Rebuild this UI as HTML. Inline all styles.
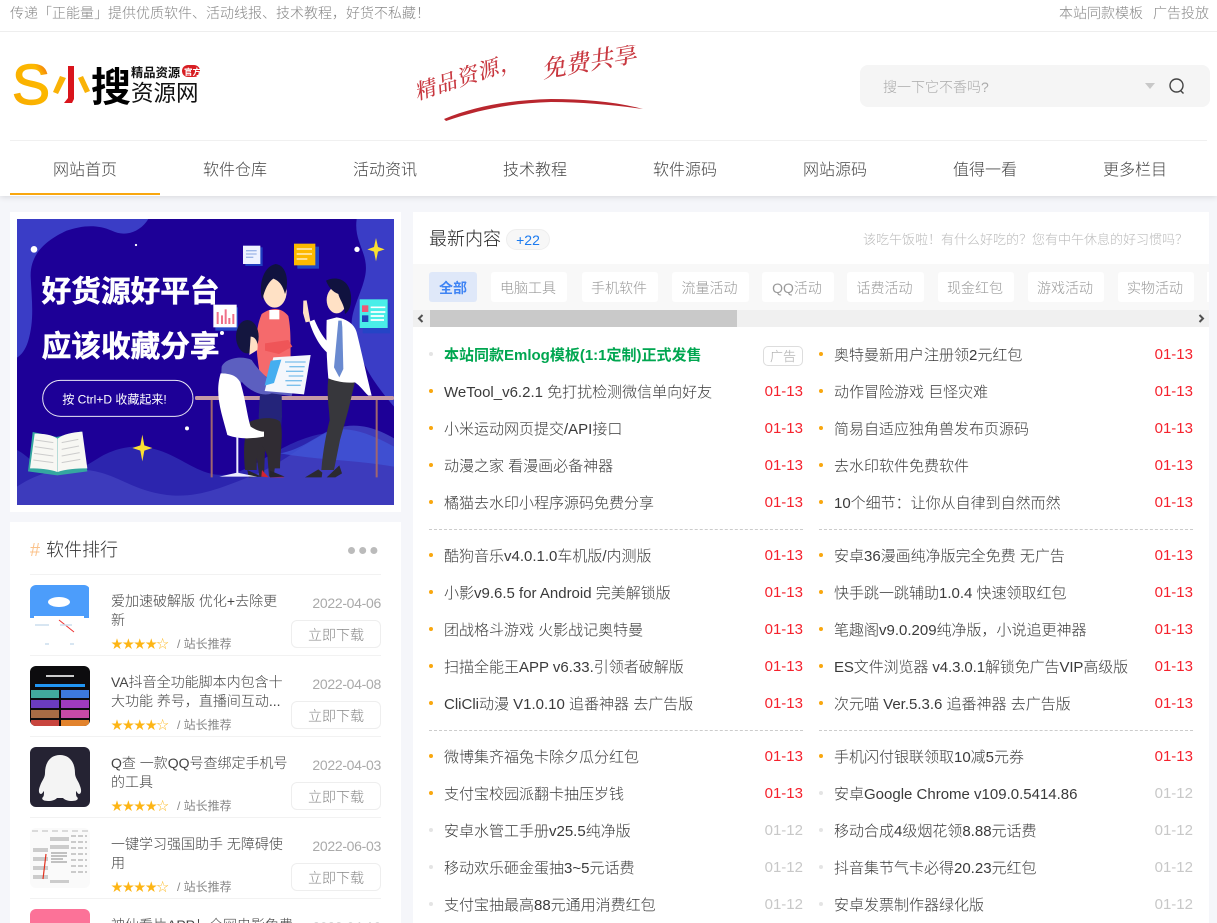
<!DOCTYPE html>
<html lang="zh-CN"><head><meta charset="utf-8"><title>小搜资源网</title>
<style>
*{box-sizing:border-box;margin:0;padding:0}
html,body{width:1217px;height:923px;overflow:hidden}
body{position:relative;background:#f5f6fa;font-family:"Liberation Sans","Noto Sans CJK SC",sans-serif;font-weight:300;color:#333}
.a{position:absolute;white-space:nowrap}
.card{position:absolute;background:#fff}
ul{list-style:none}
.c{position:absolute;width:374px}
.c li{position:relative;height:37px;line-height:39px;font-size:15px;padding-left:15px;white-space:nowrap;color:#3a3a3a}
.c li:before{content:"";position:absolute;left:0;top:16px;width:4px;height:4px;border-radius:50%;background:#f9a70f}
.c li.o:before{background:#e4e4e4}
.c li i{position:absolute;right:0;top:-1px;font-style:normal;color:#f5222d;font-size:15px;letter-spacing:0}
.c li.o i{color:#c8c8c8}
.dash{position:absolute;width:374px;border-top:1px dashed #ccc;height:0}
.nav{position:absolute;top:141px;width:150px;height:52px;line-height:59px;text-align:center;font-size:16px;color:#444}
.tab{position:absolute;top:272px;height:30px;line-height:32px;background:#fff;border-radius:3px;text-align:center;font-size:14px;color:#999;padding-right:2px}
.sep{position:absolute;left:30px;width:351px;height:1px;background:#f2f2f2}
.th{position:absolute;left:30px;width:60px;height:60px;border-radius:6px;overflow:hidden}
.t{position:absolute;left:111px;width:184px;font-size:14px;line-height:19px;color:#444;height:38px;overflow:hidden;white-space:nowrap}
.d{position:absolute;right:836px;font-size:14px;color:#aaa;letter-spacing:-.3px}
.b{position:absolute;left:291px;width:90px;height:28px;border:1px solid #eee;border-radius:6px;text-align:center;line-height:28px;font-size:14px;color:#888;background:#fff}
.s{position:absolute;left:111px;font-size:12px;line-height:14px;color:#fdb515;letter-spacing:-.6px;white-space:nowrap}
.s b{font-weight:400;color:#888;margin-left:9px;letter-spacing:0}
</style></head><body>

<div class="card" style="left:0;top:0;width:1217px;height:196px;box-shadow:0 1px 6px rgba(0,0,0,.13)"></div>
<div class="a" style="left:0;top:31px;width:1217px;height:1px;background:#eee"></div>
<div class="a" style="left:10px;top:3px;font-size:14px;line-height:20px;color:#888">传递「正能量」提供优质软件、活动线报、技术教程，好货不私藏！</div>
<div class="a" style="left:1059px;top:3px;font-size:14px;line-height:20px;color:#888">本站同款模板</div>
<div class="a" style="left:1153px;top:3px;font-size:14px;line-height:20px;color:#888">广告投放</div>

<!-- logo -->
<svg class="a" style="left:10px;top:55px" width="195" height="60" viewBox="0 0 195 60">
<defs><linearGradient id="sg" x1="0" y1="1" x2="1" y2="0"><stop offset="0" stop-color="#f7a800"/><stop offset=".7" stop-color="#fdb900"/><stop offset="1" stop-color="#e8361c"/></linearGradient></defs>
<text x="2" y="49" font-size="57" font-weight="400" fill="url(#sg)" stroke="url(#sg)" stroke-width="1.400" font-family="Liberation Sans">S</text>
<path d="M58 11h6v33l-2 4h-8l4-5z" fill="#d9141c"/>
<path d="M50 21l6 2-8 16-5-2zM73 21l-5 2 7 15 5-2z" fill="#f9b207"/>
<text x="81" y="46" font-size="40" font-weight="700" fill="#000" font-family="Noto Sans CJK SC">搜</text>
<text x="121" y="22" font-size="12.300" font-weight="700" fill="#111" font-family="Noto Sans CJK SC">精品资源</text>
<rect x="172" y="10" width="18" height="12" rx="6" fill="#d81e23"/>
<text x="174" y="20" font-size="8.500" font-weight="700" fill="#fff" font-family="Noto Sans CJK SC">官方</text>
<text x="121" y="46" font-size="22.500" fill="#111" font-weight="400" font-family="Noto Sans CJK SC">资源网</text>
</svg>

<!-- slogan -->
<svg class="a" style="left:405px;top:45px" width="250" height="85" viewBox="0 0 250 85">
<g fill="#c8373f" font-family="Noto Serif CJK SC,serif" font-style="italic" font-weight="500">
<text font-size="21" transform="translate(12 55) rotate(-18)" letter-spacing="1">精品资源，</text>
<text font-size="24" transform="translate(138 33) rotate(-10)">免费共享</text>
</g>
<path d="M39 74C70 61 105 55 146 54c35 0 65 3 92 10-30-4-60-7-92-7-38 1-70 7-105 19z" fill="#b9262e"/>
</svg>

<!-- search -->
<div class="a" style="left:860px;top:65px;width:350px;height:42px;background:#f5f5f5;border-radius:8px"></div>
<div class="a" style="left:883px;top:77px;font-size:14px;line-height:20px;color:#aaa">搜一下它不香吗?</div>
<div class="a" style="left:1145px;top:83px;width:0;height:0;border:5px solid transparent;border-top:6px solid #c8c8c8;border-bottom:0"></div>
<svg class="a" style="left:1167px;top:76px" width="20" height="20" viewBox="0 0 20 20" fill="none" stroke="#444" stroke-width="1.400"><circle cx="9.500" cy="9.500" r="6.500"/><path d="M13.500 14.500l3 3"/></svg>

<div class="a" style="left:10px;top:140px;width:1197px;height:1px;background:#f0f0f0"></div>
<div class="nav" style="left:10px">网站首页</div>
<div class="nav" style="left:160px">软件仓库</div>
<div class="nav" style="left:310px">活动资讯</div>
<div class="nav" style="left:460px">技术教程</div>
<div class="nav" style="left:610px">软件源码</div>
<div class="nav" style="left:760px">网站源码</div>
<div class="nav" style="left:910px">值得一看</div>
<div class="nav" style="left:1060px">更多栏目</div>
<div class="a" style="left:10px;top:193px;width:150px;height:2px;background:#f9a70f"></div>

<!-- left banner card -->
<div class="card" style="left:10px;top:212px;width:391px;height:300px"></div>
<svg class="a" style="left:17px;top:219px" width="377" height="286" viewBox="21 27 1131 858">
<rect x="21" y="27" width="1131" height="858" fill="#3a3dc6"/>
<path d="M170 62C110 90 60 130 62 200c3 70 12 130-8 195-8 25-20 40-33 48V720l100 140 1031-60V590c-50-60-90-110-112-190-40-70 10-130 25-200 15-70-35-100-25-173H415c-25 40-70 55-110 35-45-20-90-15-135 0z" fill="#1d0097"/>
<path d="M21 720c40 20 60 60 110 65 70 5 90-15 150-50 60-30 120-35 190-5 70 30 120 80 200 60 70-20 130-80 230-110 80-25 170-10 251 25V885H21z" fill="#2c25ae"/>
<path d="M21 830c60-40 130-60 210-50 90 10 130 60 240 75 90 10 160-20 260-60 100-40 150-100 250-140 60-20 120 0 171 30V885H21z" fill="#3d3bbc"/>
<path d="M810 730c60-10 110-50 150-70 60-10 120 10 192 50v60c-110-20-230-20-342-40z" fill="#4057d8" opacity=".75"/>
<circle cx="72" cy="118" r="10" fill="#fff"/><circle cx="378" cy="105" r="3.500" fill="#fff"/><circle cx="1041" cy="118" r="8" fill="#fff"/><circle cx="531" cy="655" r="6" fill="#fff"/><circle cx="636" cy="369" r="6" fill="#fff"/>
<path d="M1098 84l6 27 20 7-20 7-6 29-6-29-20-7 20-7z" fill="#fbe032"/>
<path d="M397 674l6 32 24 8-24 8-6 32-6-32-24-8 24-8z" fill="#fbe032"/>
<g font-family="Noto Sans CJK SC,sans-serif" fill="#fff" stroke="#fff" stroke-width="1.500" font-weight="700">
<text x="95" y="275" font-size="89">好货源好平台</text>
<text x="95" y="439" font-size="89">应该收藏分享</text>
</g>
<rect x="98" y="511" width="451" height="108" rx="54" fill="none" stroke="#fff" stroke-width="3" opacity=".9"/>
<text x="157" y="581" font-size="36" fill="#fff" font-weight="400" font-family="Liberation Sans,Noto Sans CJK SC,sans-serif">按 Ctrl+D 收藏起来!</text>
<!-- book -->
<path d="M54 784l14-118 72 15 74-17 18 120-90 12z" fill="#35a7a0"/>
<path d="M60 775l14-104c26 0 52 3 68 15v100c-22-9-54-11-82-11zM232 775l-15-110c-30 2-58 8-74 21v100c22-9 58-11 89-11z" fill="#f7f7f3"/>
<g stroke="#ccc" stroke-width="3" fill="none"><path d="M76 690l54 8M74 710l56 8M72 730l58 8M70 750l60 8M155 698l50-10M155 718l52-10M155 738l54-10M155 758l56-10"/></g>
<!-- notes -->
<rect x="706" y="112" width="52" height="56" fill="#1f3dc0"/><rect x="699" y="107" width="52" height="55" fill="#eef2ff"/>
<path d="M708 122h32M708 132h32M708 142h22" stroke="#9db6e8" stroke-width="4"/>
<rect x="862" y="110" width="65" height="66" fill="#1e46c8"/><rect x="852" y="101" width="64" height="65" fill="#fdb900"/>
<path d="M860 117h46M860 132h46M860 147h32" stroke="#ffe6a5" stroke-width="5"/>
<rect x="1058" y="280" width="82" height="90" fill="#2544c6"/><rect x="1049" y="268" width="84" height="86" fill="#4aeee8"/>
<rect x="1056" y="286" width="19" height="20" fill="#ee5a74"/><rect x="1056" y="316" width="19" height="20" fill="#2246b8"/>
<path d="M1082 292h44M1082 306h44M1082 318h40M1082 330h40" stroke="#fff" stroke-width="5"/>
<rect x="616" y="292" width="68" height="70" fill="#2544c6"/><rect x="610" y="284" width="70" height="68" fill="#fff"/>
<path d="M620 342v-36h6v36zM633 342v-26h6v26zM644 342v-44h6v44zM655 342v-18h6v18zM667 342v-30h6v30z" fill="#ef7189"/>
<!-- table -->
<path d="M602 570h6v232h-6zM1097 570h6v232h-6z" fill="#a0666f"/>
<rect x="555" y="558" width="597" height="12" rx="4" fill="#c59aa6"/>
<!-- standing woman -->
<path d="M753 500l-7 120 5 60h60l5-60-2-130z" fill="#24247a"/>
<path d="M726 640l22 160h14l5-130 10 130h14l18-140-5-30h-60z" fill="#302c33"/>
<path d="M756 780l20 22-22-2zM780 790l44 12h-44z" fill="#d3232f"/>
<path d="M755 312c30-22 60-20 80 6 10 50 5 100 8 190-35 20-70 0-95-25-10-60-15-120 7-171z" fill="#f56a6c"/>
<path d="M778 300h30v28h-30z" fill="#fff"/>
<ellipse cx="794" cy="245" rx="36" ry="48" fill="#ffe1c5"/>
<path d="M757 270c-12-40 0-100 40-108 36 4 40 60 28 90-8-30-20-40-35-46-14 10-26 30-33 64z" fill="#10123f"/>
<path d="M765 400l70-10 12 20-40 22-42-10z" fill="#ef5558"/>
<!-- seated man -->
<path d="M720 635c20-10 70-18 90 0 12 30 0 90 0 140h-30c-2-40-20-60-30-80-10 30-10 60-10 85h-35c-5-50-5-110 15-145z" fill="#302c33"/>
<path d="M712 780l42 20-38 2zM780 782l44 18-44 2z" fill="#27252c"/>
<path d="M635 470c10-25 60-35 90-20 20 30 50 60 80 78l45 12-5 18-60-8c-30 12-70-10-90-35-20 40-10 60-5 80h-30c-25-40-28-90-25-125z" fill="#5c5fc0"/>
<path d="M632 490c25 0 50 5 60 30 15 50 20 100 30 130 15 10 30 15 40 15v15c-30 5-70 10-110-5-15-60-40-120-20-185z" fill="#fff"/>
<path d="M679 680h6v115l-6-5zM628 800l54-12 60 12z" fill="#eef"/>
<ellipse cx="712" cy="380" rx="34" ry="50" fill="#14163f"/>
<path d="M722 380c15 0 24 18 20 40l-24 15z" fill="#ffe1c5"/>
<!-- laptop -->
<path d="M790 442l112-7-20 118-118-10z" fill="#f4f7fc"/>
<path d="M782 452l32-3-22 70-28 8z" fill="#45aef0"/>
<path d="M825 456h62M838 470h46M828 484h52M836 498h44M826 512h50M830 526h42" stroke="#7cc0ec" stroke-width="4"/>
<!-- standing man -->
<path d="M955 505l80 10-20 85-25 90-18 90h-38c5-60 15-110 25-150-2-40-10-80-4-125z" fill="#37373c"/>
<path d="M885 802l40-24 12 10-2 14zM950 802l38-36 8 24-20 12z" fill="#2b2930"/>
<path d="M980 322l-30 8c-2 60 0 120 5 175 25 10 55 15 80 12 15 10 25 25 40 40h10c-15-60-30-130-45-190-5-20-25-40-60-45z" fill="#fff"/>
<path d="M898 335l15-6c15 35 30 60 45 70l-5 30c-25-20-45-60-55-94z" fill="#fff"/>
<path d="M985 332h10l2 20 3 125-12 25-16-30z" fill="#6a8ad0"/>
<ellipse cx="980" cy="270" rx="30" ry="40" fill="#ffe1c5"/>
<path d="M948 212c30-15 70-5 75 45 2 25-3 45-18 55-2-30-15-40-20-60-15-5-30-20-37-40z" fill="#10123f"/>
<path d="M880 272l10-1 6 35 5 28-14 3-8-28z" fill="#ffe1c5"/>
</svg>

<!-- rank card -->
<div class="card" style="left:10px;top:522px;width:391px;height:401px"></div>
<div class="a" style="left:30px;top:537px;font-size:18px;line-height:26px;color:#fbc28a">#</div>
<div class="a" style="left:46px;top:537px;font-size:18px;line-height:26px;color:#333">软件排行</div>
<div class="a" style="left:348px;top:547px;width:7px;height:7px;border-radius:50%;background:#bbb;box-shadow:11.200px 0 #bbb,22.400px 0 #bbb"></div>
<div class="sep" style="top:574px"></div><div class="sep" style="top:655px"></div><div class="sep" style="top:736px"></div><div class="sep" style="top:817px"></div><div class="sep" style="top:898px"></div>

<svg class="th" style="top:585px" viewBox="0 0 60 60"><rect width="60" height="60" fill="#fff"/><rect width="59" height="33" fill="#4c9dfb"/><ellipse cx="29" cy="17" rx="11" ry="5" fill="#fff"/><rect x="4" y="31" width="50" height="7" fill="#fff"/><path d="M29 35l15 12" stroke="#e33" stroke-width="1"/><path d="M5 40h14M30 40h12M15 59h4M40 59h4" stroke="#cde" stroke-width="1.500"/></svg>
<svg class="th" style="top:666px" viewBox="0 0 60 60"><rect width="60" height="60" fill="#0d0c0e"/><rect x="5" y="18" width="50" height="3" fill="#2196f3"/><path d="M16 10h28" stroke="#ccc" stroke-width="2"/>
<rect x="1" y="24" width="28" height="8" fill="#41a99d"/><rect x="31" y="24" width="28" height="8" fill="#3d79de"/><rect x="1" y="34" width="28" height="8" fill="#6a3cc0"/><rect x="31" y="34" width="28" height="8" fill="#9f3bbe"/><rect x="1" y="44" width="28" height="8" fill="#a86c45"/><rect x="31" y="44" width="28" height="8" fill="#c84aa7"/><rect x="1" y="54" width="28" height="6" fill="#c8453e"/><rect x="31" y="54" width="28" height="6" fill="#e2832d"/></svg>
<svg class="th" style="top:747px" viewBox="0 0 60 60"><rect width="60" height="60" fill="#252333"/><path d="M30 8c10 0 15 8 15 18 0 5 3 7 5 13 2 5 1 8-1 8-1 0-2-2-3-3 0 3 0 5 1 6 2 2 0 4-5 4-4 0-7-1-9-3h-6c-2 2-5 3-9 3-5 0-7-2-5-4 1-1 1-3 1-6-1 1-2 3-3 3-2 0-3-3-1-8 2-6 5-8 5-13C15 16 20 8 30 8z" fill="#f4f4f4"/></svg>
<svg class="th" style="top:828px" viewBox="0 0 60 60"><rect width="60" height="60" fill="#fafafa"/><path d="M2 3h56" stroke="#bbb" stroke-width="1" stroke-dasharray="6 4"/><g fill="#ccc"><rect x="3" y="20" width="15" height="4"/><rect x="3" y="29" width="15" height="4"/><rect x="3" y="38" width="15" height="4"/><rect x="3" y="47" width="15" height="4"/><rect x="20" y="9" width="19" height="4"/><rect x="20" y="17" width="19" height="4"/><rect x="20" y="52" width="19" height="3"/></g><path d="M21 25h16M21 28h16M21 31h12M21 34h16" stroke="#888" stroke-width="1"/><path d="M41 8h16M41 14h16M41 20h16M41 26h16M41 32h16M41 38h16M41 44h16" stroke="#bbb" stroke-width="1.500" stroke-dasharray="5 2"/><path d="M16 26l-3 25" stroke="#e2321f" stroke-width="1.200"/></svg>
<div class="th" style="top:909px;background:#fc7298"></div>

<div class="t" style="top:592px">爱加速破解版 优化+去除更<br>新</div>
<div class="t" style="top:673px">VA抖音全功能脚本内包含十<br>大功能 养号，直播间互动...</div>
<div class="t" style="top:754px">Q查 一款QQ号查绑定手机号<br>的工具</div>
<div class="t" style="top:835px">一键学习强国助手 无障碍使<br>用</div>
<div class="t" style="top:916px">神仙看片APP！全网电影免费</div>

<div class="d" style="top:595px">2022-04-06</div><div class="d" style="top:676px">2022-04-08</div><div class="d" style="top:757px">2022-04-03</div><div class="d" style="top:838px">2022-06-03</div><div class="d" style="top:919px">2022-04-10</div>

<div class="b" style="top:620px">立即下载</div><div class="b" style="top:701px">立即下载</div><div class="b" style="top:782px">立即下载</div><div class="b" style="top:863px">立即下载</div>

<div class="s" style="top:637px">★★★★☆<b>/ 站长推荐</b></div>
<div class="s" style="top:718px">★★★★☆<b>/ 站长推荐</b></div>
<div class="s" style="top:799px">★★★★☆<b>/ 站长推荐</b></div>
<div class="s" style="top:880px">★★★★☆<b>/ 站长推荐</b></div>

<!-- main card -->
<div class="card" style="left:413px;top:212px;width:796px;height:711px"></div>
<div class="a" style="left:429px;top:226px;font-size:18px;line-height:26px;color:#222">最新内容</div>
<div class="a" style="left:506px;top:229px;width:44px;height:21px;line-height:21px;border:1px solid #eee;border-radius:11px;background:#f7f7f7;text-align:center;font-size:14px;color:#1a7af0">+22</div>
<div class="a" style="left:863px;top:229px;font-size:13px;line-height:21px;color:#bbb">该吃午饭啦！有什么好吃的？您有中午休息的好习惯吗？</div>

<div class="a" style="left:413px;top:264px;width:796px;height:46px;background:#f8f8f8"></div>
<div class="tab" style="left:429px;width:48px;background:#dfe8f9;color:#3f84f4;font-weight:700;padding-right:0">全部</div>
<div class="tab" style="left:491px;width:76px">电脑工具</div>
<div class="tab" style="left:582px;width:76px">手机软件</div>
<div class="tab" style="left:672px;width:77px">流量活动</div>
<div class="tab" style="left:762px;width:72px">QQ活动</div>
<div class="tab" style="left:847px;width:77px">话费活动</div>
<div class="tab" style="left:938px;width:76px">现金红包</div>
<div class="tab" style="left:1028px;width:76px">游戏活动</div>
<div class="tab" style="left:1118px;width:76px">实物活动</div>
<div class="a" style="left:1207px;top:272px;width:2px;height:30px;background:#fff"></div>

<div class="a" style="left:413px;top:310px;width:796px;height:17px;background:#f0f0f0"></div>
<div class="a" style="left:430px;top:310px;width:307px;height:17px;background:#c9c9c9"></div>
<svg class="a" style="left:413px;top:310px" width="17" height="17" viewBox="0 0 17 17"><path d="M9.500 5l-3.500 3.500 3.500 3.500" fill="none" stroke="#505050" stroke-width="2"/></svg>
<svg class="a" style="left:1192px;top:310px" width="17" height="17" viewBox="0 0 17 17"><path d="M7.500 5l3.500 3.500-3.500 3.500" fill="none" stroke="#505050" stroke-width="2"/></svg>

<ul class="c" style="left:429px;top:336px">
<li class="o" style="color:#00a650;font-weight:700">本站同款Emlog模板(1:1定制)正式发售<span style="position:absolute;left:334px;top:10px;width:40px;height:20px;border:1px solid #ddd;border-radius:5px;line-height:19px;font-size:13px;font-weight:300;text-align:center;color:#aaa">广告</span></li>
<li>WeTool_v6.2.1 免打扰检测微信单向好友<i>01-13</i></li>
<li>小米运动网页提交/API接口<i>01-13</i></li>
<li>动漫之家 看漫画必备神器<i>01-13</i></li>
<li>橘猫去水印小程序源码免费分享<i>01-13</i></li>
</ul>
<ul class="c" style="left:819px;top:336px">
<li>奥特曼新用户注册领2元红包<i>01-13</i></li>
<li>动作冒险游戏 巨怪灾难<i>01-13</i></li>
<li>简易自适应独角兽发布页源码<i>01-13</i></li>
<li>去水印软件免费软件<i>01-13</i></li>
<li>10个细节：让你从自律到自然而然<i>01-13</i></li>
</ul>
<div class="dash" style="left:429px;top:529px"></div><div class="dash" style="left:819px;top:529px"></div>
<ul class="c" style="left:429px;top:537px">
<li>酷狗音乐v4.0.1.0车机版/内测版<i>01-13</i></li>
<li>小影v9.6.5 for Android 完美解锁版<i>01-13</i></li>
<li>团战格斗游戏 火影战记奥特曼<i>01-13</i></li>
<li>扫描全能王APP v6.33.引领者破解版<i>01-13</i></li>
<li>CliCli动漫 V1.0.10 追番神器 去广告版<i>01-13</i></li>
</ul>
<ul class="c" style="left:819px;top:537px">
<li>安卓36漫画纯净版完全免费 无广告<i>01-13</i></li>
<li>快手跳一跳辅助1.0.4 快速领取红包<i>01-13</i></li>
<li>笔趣阁v9.0.209纯净版，小说追更神器<i>01-13</i></li>
<li style="letter-spacing:-.1px">ES文件浏览器 v4.3.0.1解锁免广告VIP高级版<i>01-13</i></li>
<li>次元喵 Ver.5.3.6 追番神器 去广告版<i>01-13</i></li>
</ul>
<div class="dash" style="left:429px;top:730px"></div><div class="dash" style="left:819px;top:730px"></div>
<ul class="c" style="left:429px;top:738px">
<li>微博集齐福兔卡除夕瓜分红包<i>01-13</i></li>
<li>支付宝校园派翻卡抽压岁钱<i>01-13</i></li>
<li class="o">安卓水管工手册v25.5纯净版<i>01-12</i></li>
<li class="o">移动欢乐砸金蛋抽3~5元话费<i>01-12</i></li>
<li class="o">支付宝抽最高88元通用消费红包<i>01-12</i></li>
</ul>
<ul class="c" style="left:819px;top:738px">
<li>手机闪付银联领取10减5元券<i>01-13</i></li>
<li class="o">安卓Google Chrome v109.0.5414.86<i>01-12</i></li>
<li class="o">移动合成4级烟花领8.88元话费<i>01-12</i></li>
<li class="o">抖音集节气卡必得20.23元红包<i>01-12</i></li>
<li class="o">安卓发票制作器绿化版<i>01-12</i></li>
</ul>
</body></html>
